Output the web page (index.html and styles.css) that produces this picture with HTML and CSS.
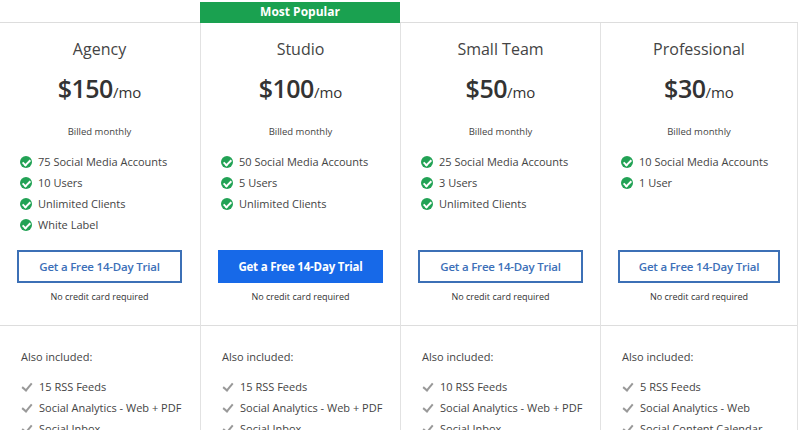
FILE: index.html
```html
<!DOCTYPE html>
<html>
<head>
  <meta charset="utf-8">
  <title>Pricing</title>
  <link rel="stylesheet" href="styles.css">
</head>
<body>
  <div class="pricing">

    <!-- Agency -->
    <div class="plan">
      <div class="tag"></div>
      <div class="card">
        <div class="top">
          <h2 class="name">Agency</h2>
          <div class="price">$150<span class="per">/mo</span></div>
          <p class="billed">Billed monthly</p>
          <ul class="features">
            <li><span class="ok"></span>75 Social Media Accounts</li>
            <li><span class="ok"></span>10 Users</li>
            <li><span class="ok"></span>Unlimited Clients</li>
            <li><span class="ok"></span>White Label</li>
          </ul>
          <a class="btn" href="#">Get a Free 14-Day Trial</a>
          <p class="note">No credit card required</p>
        </div>
        <div class="extra">
          <p class="also">Also included:</p>
          <ul class="more">
            <li><span class="tick"></span>15 RSS Feeds</li>
            <li><span class="tick"></span>Social Analytics - Web + PDF</li>
            <li><span class="tick"></span>Social Inbox</li>
          </ul>
        </div>
      </div>
    </div>

    <!-- Studio -->
    <div class="plan popular">
      <div class="tag">Most Popular</div>
      <div class="card">
        <div class="top">
          <h2 class="name">Studio</h2>
          <div class="price">$100<span class="per">/mo</span></div>
          <p class="billed">Billed monthly</p>
          <ul class="features">
            <li><span class="ok"></span>50 Social Media Accounts</li>
            <li><span class="ok"></span>5 Users</li>
            <li><span class="ok"></span>Unlimited Clients</li>
          </ul>
          <a class="btn solid" href="#">Get a Free 14-Day Trial</a>
          <p class="note">No credit card required</p>
        </div>
        <div class="extra">
          <p class="also">Also included:</p>
          <ul class="more">
            <li><span class="tick"></span>15 RSS Feeds</li>
            <li><span class="tick"></span>Social Analytics - Web + PDF</li>
            <li><span class="tick"></span>Social Inbox</li>
          </ul>
        </div>
      </div>
    </div>

    <!-- Small Team -->
    <div class="plan">
      <div class="tag"></div>
      <div class="card">
        <div class="top">
          <h2 class="name">Small Team</h2>
          <div class="price">$50<span class="per">/mo</span></div>
          <p class="billed">Billed monthly</p>
          <ul class="features">
            <li><span class="ok"></span>25 Social Media Accounts</li>
            <li><span class="ok"></span>3 Users</li>
            <li><span class="ok"></span>Unlimited Clients</li>
          </ul>
          <a class="btn" href="#">Get a Free 14-Day Trial</a>
          <p class="note">No credit card required</p>
        </div>
        <div class="extra">
          <p class="also">Also included:</p>
          <ul class="more">
            <li><span class="tick"></span>10 RSS Feeds</li>
            <li><span class="tick"></span>Social Analytics - Web + PDF</li>
            <li><span class="tick"></span>Social Inbox</li>
          </ul>
        </div>
      </div>
    </div>

    <!-- Professional -->
    <div class="plan">
      <div class="tag"></div>
      <div class="card">
        <div class="top">
          <h2 class="name">Professional</h2>
          <div class="price">$30<span class="per">/mo</span></div>
          <p class="billed">Billed monthly</p>
          <ul class="features">
            <li><span class="ok"></span>10 Social Media Accounts</li>
            <li><span class="ok"></span>1 User</li>
          </ul>
          <a class="btn" href="#">Get a Free 14-Day Trial</a>
          <p class="note">No credit card required</p>
        </div>
        <div class="extra">
          <p class="also">Also included:</p>
          <ul class="more">
            <li><span class="tick"></span>5 RSS Feeds</li>
            <li><span class="tick"></span>Social Analytics - Web</li>
            <li><span class="tick"></span>Social Content Calendar</li>
          </ul>
        </div>
      </div>
    </div>

  </div>
</body>
</html>
```

FILE: styles.css
```css
body{
  margin: 0;
  background: #fff;
  font-family: "Open Sans", "Liberation Sans", sans-serif;
  color: #333;
}
.pricing{
  display: grid;
  grid-template-columns: 200px 200px 200px 198px;
  padding-top: 2px;
}
.tag{
  height: 20px;
  border-bottom: 1px solid #ddd;
  color: #fff;
  font-size: 12px;
  font-weight: 700;
  line-height: 20px;
  text-align: center;
}
.popular .tag{
  background-color: #1aa150;
  border-bottom-color: #1aa150;
}
.card{
  border-left: 1px solid #e2e2e2;
}
.plan:first-child .card{
  border-left: 0;
}
.plan:last-child .card{
  border-right: 1px solid #e2e2e2;
}
.top{
  padding: 16px 17px 22px 17px;
  text-align: center;
  border-bottom: 1px solid #ddd;
}
.plan:first-child .top{
  padding-left: 17px;
  padding-right: 18px;
}
.name{
  margin: 0;
  font-size: 16px;
  line-height: 20px;
  font-weight: 500;
  color: #444;
}
.price{
  margin-top: 13px;
  font-size: 25px;
  line-height: 32px;
  font-weight: 600;
  color: #333;
  letter-spacing: -0.5px;
}
.per{
  font-size: 15px;
  font-weight: 400;
  letter-spacing: 0;
}
.billed{
  margin: 17px 0 0;
  font-size: 9.5px;
  line-height: 14px;
  color: #444;
}
.features{
  margin: 12px 0 0;
  padding: 0 0 0 3px;
  list-style: none;
  min-height: 84px;
  text-align: left;
}
.features li{
  display: flex;
  align-items: center;
  height: 21px;
  font-size: 11px;
  color: #444;
  white-space: nowrap;
}
.ok{
  display: inline-block;
  width: 12px;
  height: 12px;
  margin-right: 6px;
  border-radius: 50%;
  background-color: #22a255;
  position: relative;
  flex: none;
}
.ok:after{
  content: "";
  position: absolute;
  left: 4px;
  top: 2px;
  width: 3px;
  height: 6px;
  border: solid #fff;
  border-width: 0 2px 2px 0;
  transform: rotate(45deg);
}
.btn{
  display: block;
  margin-top: 15px;
  height: 29px;
  line-height: 29px;
  border: 2px solid #3c70b6;
  color: #3c6fb8;
  font-size: 11.5px;
  font-weight: 600;
  text-decoration: none;
  letter-spacing: -0.2px;
}
.btn.solid{
  background-color: #1769e8;
  border-color: #1769e8;
  color: #fff;
  font-weight: 700;
}
.note{
  margin: 7px 0 0;
  font-size: 9px;
  line-height: 13px;
  color: #333;
}
.extra{
  padding: 23px 10px 0 21px;
}
.also{
  margin: 0;
  font-size: 11px;
  line-height: 16px;
  color: #444;
}
.more{
  margin: 11px 0 0;
  padding: 0;
  list-style: none;
}
.more li{
  display: flex;
  align-items: center;
  height: 21px;
  font-size: 11px;
  color: #444;
  white-space: nowrap;
}
.tick{
  display: inline-block;
  width: 12px;
  height: 12px;
  margin-right: 6px;
  position: relative;
  flex: none;
}
.tick:after{
  content: "";
  position: absolute;
  left: 3px;
  top: 0;
  width: 4px;
  height: 8px;
  border: solid #999;
  border-width: 0 2px 2px 0;
  transform: rotate(40deg);
}
```
